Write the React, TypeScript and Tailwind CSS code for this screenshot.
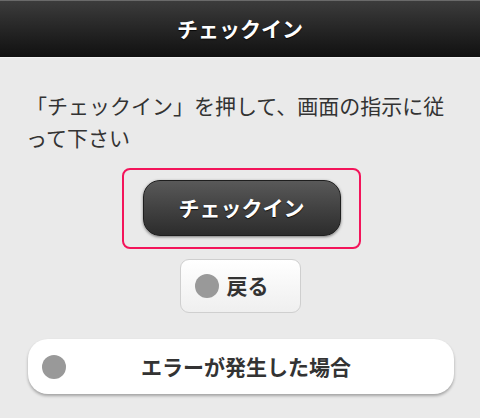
export default function App() {
  return (
    <div
      className="w-[480px] h-[418px] overflow-hidden bg-[#eaeaea] text-[#333]"
      style={{ fontFamily: '"Noto Sans CJK JP", "Noto Sans", sans-serif' }}
    >
      {/* Header */}
      <div className="h-[58px] flex items-center justify-center bg-gradient-to-b from-[#3c3c3c] to-[#111] border-t border-[#6a6a6a] border-b border-b-[#f4f4f4]">
        <h1 className="text-[21px] font-bold text-white [text-shadow:0_1px_1px_rgba(0,0,0,0.8)]">
          チェックイン
        </h1>
      </div>

      {/* Instruction */}
      <p className="mt-[31px] pl-[26px] pr-[20px] text-[21px] leading-[32px]">
        「チェックイン」を押して、画面の指示に従って下さい
      </p>

      {/* Check-in (highlighted) */}
      <div className="mt-[15px] ml-[122px] w-[239px] h-[81px] rounded-[8px] border-2 border-[#f3145a] flex items-center justify-center pb-[2px]">
        <button className="w-[198px] h-[56px] rounded-[17px] border border-[#1e1e1e] bg-gradient-to-b from-[#595959] to-[#2c2c2c] shadow-[0_1px_3px_rgba(0,0,0,0.5)] text-white text-[21px] font-bold [text-shadow:0_1px_1px_rgba(0,0,0,0.8)]">
          チェックイン
        </button>
      </div>

      {/* Back */}
      <div className="mt-[10px] flex justify-center">
        <button className="w-[121px] h-[54px] rounded-[9px] border border-[#cfcfcf] bg-gradient-to-b from-[#ffffff] to-[#efefef] flex items-center pl-[14px] gap-[8px]">
          <span className="w-[24px] h-[24px] rounded-full bg-[#999]" />
          <span className="text-[21px] font-bold text-[#333]">戻る</span>
        </button>
      </div>

      {/* Error */}
      <div className="mt-[26px] px-[28px] pr-[26px]">
        <button className="w-full h-[55px] rounded-[20px] bg-white shadow-[0_2px_3px_rgba(0,0,0,0.3)] flex items-center px-[14px]">
          <span className="w-[24px] h-[24px] rounded-full bg-[#999] shrink-0" />
          <span className="flex-1 text-center text-[21px] font-bold text-[#333]">
            エラーが発生した場合
          </span>
          <span className="w-[14px] shrink-0" />
        </button>
      </div>
    </div>
  );
}
